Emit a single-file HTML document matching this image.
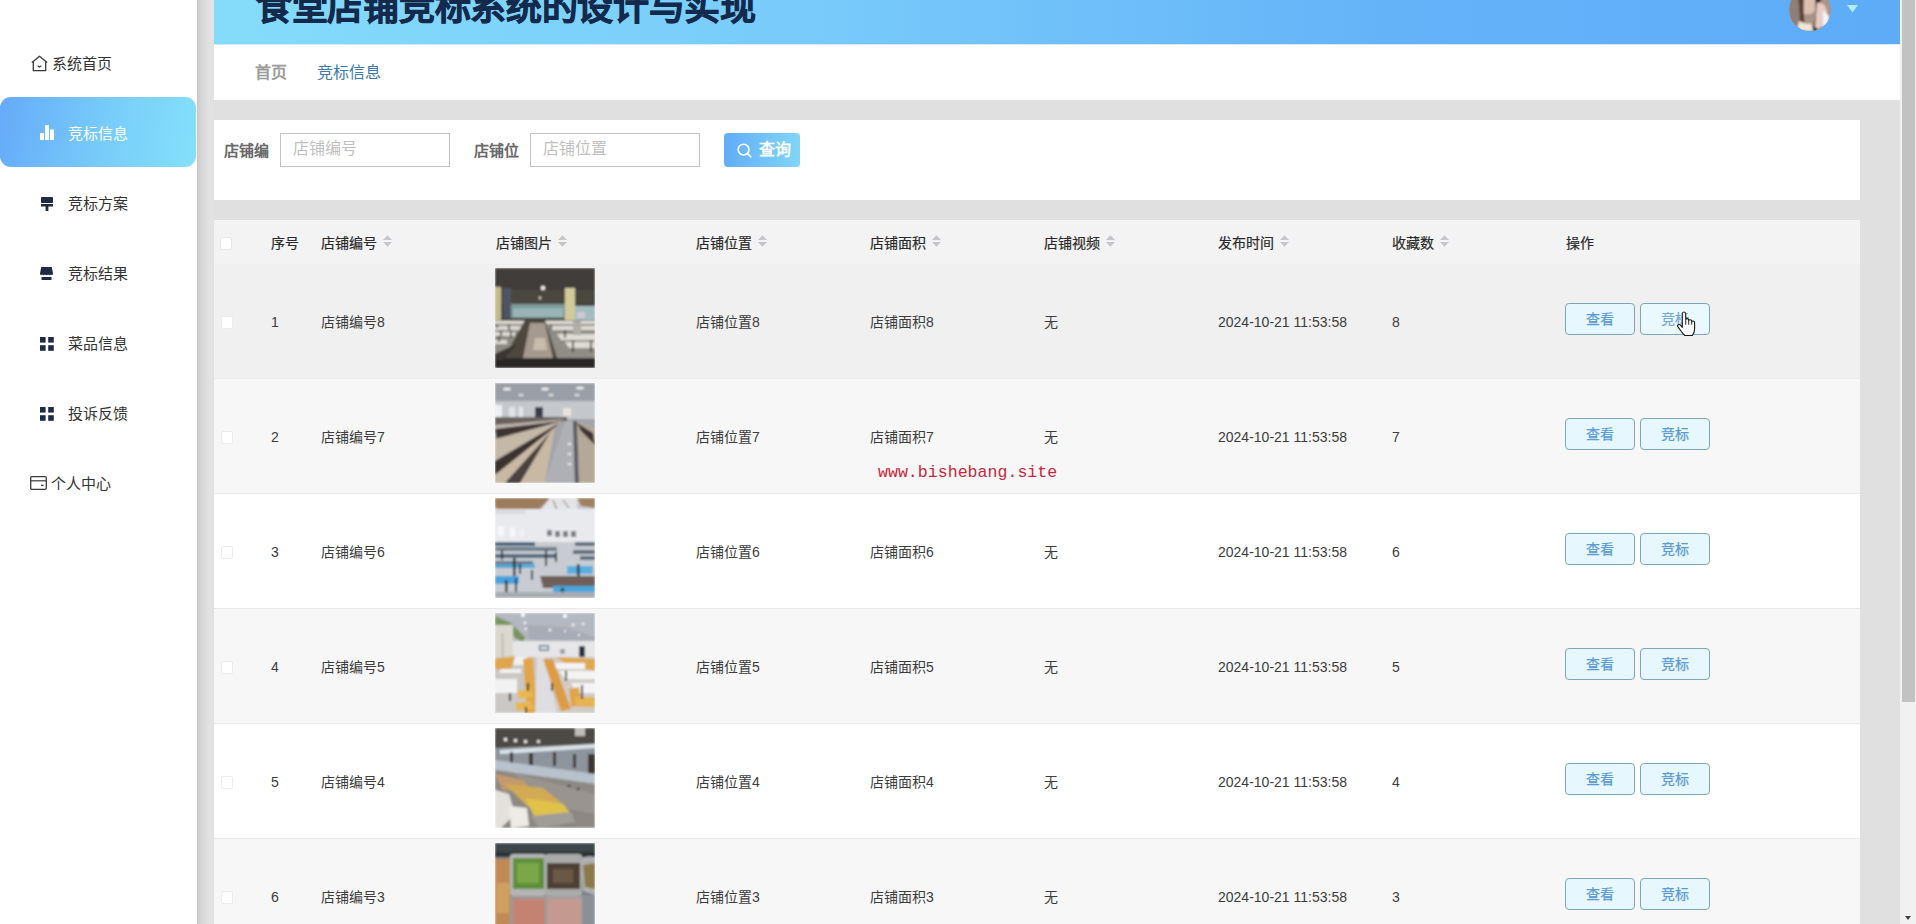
<!DOCTYPE html><html lang="zh-CN"><head><meta charset="utf-8"><title>食堂店铺竞标系统</title><style>
*{box-sizing:border-box;margin:0;padding:0}
html,body{width:1916px;height:924px;overflow:hidden}
body{background:#e0e0e0;font-family:"Liberation Sans",sans-serif;position:relative;color:#333}
.a{position:absolute}
.t{position:absolute;white-space:nowrap;line-height:1}
#side{left:0;top:0;width:197px;height:924px;background:#fff}
#sideshadow{left:197px;top:0;width:17px;height:924px;background:linear-gradient(to right,#c6c6c6 0px,#d3d3d3 3px,#dcdcdc 8px,#e2e2e2 12px,#e2e2e2 17px)}
.mi{position:absolute;left:0;width:196px;height:70px}
.mi .tx{position:absolute;font-size:15px;line-height:15px;color:#333;white-space:nowrap}
#active{background:linear-gradient(100deg,#65aaf8 0%,#78cdf9 55%,#84e0fb 100%);border-radius:11px}
#header{left:214px;top:0;width:1686px;height:44px;background:linear-gradient(to right,#85dcfa 0%,#78cbfa 35%,#64b3f9 70%,#5eacf8 100%)}
#hline{left:214px;top:44px;width:1686px;height:1px;background:#d2eafb}
#title{left:256px;top:-10px;font-size:36px;line-height:1;font-weight:bold;color:#132a4d;letter-spacing:-0.3px;-webkit-text-stroke:0.7px #132a4d}
#crumb{left:214px;top:45px;width:1686px;height:55px;background:#fff}
#search{left:214px;top:120px;width:1646px;height:80px;background:#fff}
.lbl{font-size:15px;font-weight:bold;color:#6a6a6a}
.inp{position:absolute;top:133px;width:170px;height:34px;border:1px solid #c2c2c2;background:#fff}
.ph{font-size:16px;color:#bfbfbf}
#btn{left:724px;top:133px;width:76px;height:34px;border-radius:4px;background:linear-gradient(to right,#62adf8,#80d6f9)}
#table{left:214px;top:220px;width:1646px;height:704px;background:#fff}
.hd{font-size:14px;color:#2a2a2a;-webkit-text-stroke:0.2px #2a2a2a}
.row{position:absolute;left:0;width:1646px;height:115px;border-bottom:1px solid #e8e8e8}
.cell{font-size:14px;color:#3c3c3c}
.cb{position:absolute;width:12px;height:13px;background:#fff;border:1px solid #ececec;border-radius:2px}
.sort{position:absolute;width:9px;height:12px}
.b{position:absolute;width:70px;height:32px;border:1px solid #7fa6b8;border-radius:4px;background:#e6f8fd;color:#5c9bd1;font-size:14px;line-height:30px;text-align:center;-webkit-text-stroke:0.25px #5c9bd1}
.img{position:absolute;left:281px;width:100px;height:100px;overflow:hidden}
#band{left:1860px;top:200px;width:40px;height:724px;background:#e0e0e0}
#sb{left:1900px;top:0;width:16px;height:924px;background:#f1f1f1}
#thumb{left:1902px;top:0;width:13px;height:702px;background:#c2c2c2}
#wm{left:878px;top:464.5px;font-family:"Liberation Mono",monospace;font-size:16.6px;color:#c6283a;line-height:1}
</style></head><body>
<div class="a" id="side"></div><div class="a" id="sideshadow"></div>
<div class="a" id="active" style="left:0;top:97px;width:196px;height:70px"></div>
<div class="a" style="left:31px;top:55px;line-height:0"><svg width="17" height="17" viewBox="0 0 17 17"><path d="M1.2 7.2 L8.5 1.2 L15.8 7.2" fill="none" stroke="#3a3a3a" stroke-width="1.3" stroke-linejoin="round" stroke-linecap="round"/><path d="M2.3 6.6 V15.6 H14.7 V6.6" fill="none" stroke="#3a3a3a" stroke-width="1.3" stroke-linejoin="round"/><path d="M6.6 10.8 L8.5 12 L10.4 10.8" fill="none" stroke="#3a3a3a" stroke-width="1.1"/></svg></div>
<div class="t" style="left:52px;top:56px;font-size:15px;color:#333">系统首页</div>
<div class="a" style="left:40px;top:125px;line-height:0"><svg width="14" height="15" viewBox="0 0 14 15"><rect x="0" y="8" width="4" height="7" fill="#fff"/><rect x="5" y="0" width="4" height="15" fill="#fff"/><rect x="10" y="4.5" width="4" height="10.5" fill="#fff"/></svg></div>
<div class="t" style="left:68px;top:126px;font-size:15px;color:#fff">竞标信息</div>
<div class="a" style="left:41px;top:197px;line-height:0"><svg width="12" height="14" viewBox="0 0 12 14"><rect x="0" y="0" width="12" height="6" rx="0.8" fill="#1f2a44"/><rect x="0" y="7" width="12" height="2.5" fill="#1f2a44"/><rect x="4.6" y="9" width="2.8" height="5" fill="#1f2a44"/></svg></div>
<div class="t" style="left:68px;top:196px;font-size:15px;color:#333">竞标方案</div>
<div class="a" style="left:40px;top:267px;line-height:0"><svg width="13" height="13" viewBox="0 0 13 13"><path d="M1.2 0 H11.8 L13 6.5 C13 8 11.5 8.5 10.8 7.6 C10 8.6 8.8 8.6 8.1 7.6 C7.4 8.6 5.6 8.6 4.9 7.6 C4.2 8.6 3 8.6 2.2 7.6 C1.5 8.5 0 8 0 6.5 Z" fill="#1f2a44"/><rect x="1.5" y="10" width="10" height="3" fill="#1f2a44"/></svg></div>
<div class="t" style="left:68px;top:266px;font-size:15px;color:#333">竞标结果</div>
<div class="a" style="left:40px;top:337px;line-height:0"><svg width="14" height="14" viewBox="0 0 14 14"><rect x="0" y="0" width="5.6" height="5.6" fill="#1f2a44"/><rect x="8.2" y="0" width="5.6" height="5.6" fill="#1f2a44"/><rect x="0" y="8.2" width="5.6" height="5.6" fill="#1f2a44"/><rect x="8.2" y="8.2" width="5.6" height="5.6" fill="#1f2a44"/></svg></div>
<div class="t" style="left:68px;top:336px;font-size:15px;color:#333">菜品信息</div>
<div class="a" style="left:40px;top:407px;line-height:0"><svg width="14" height="14" viewBox="0 0 14 14"><rect x="0" y="0" width="5.6" height="5.6" fill="#1f2a44"/><rect x="8.2" y="0" width="5.6" height="5.6" fill="#1f2a44"/><rect x="0" y="8.2" width="5.6" height="5.6" fill="#1f2a44"/><rect x="8.2" y="8.2" width="5.6" height="5.6" fill="#1f2a44"/></svg></div>
<div class="t" style="left:68px;top:406px;font-size:15px;color:#333">投诉反馈</div>
<div class="a" style="left:30px;top:476px;line-height:0"><svg width="17" height="14" viewBox="0 0 17 14"><rect x="0.7" y="0.7" width="15.6" height="12.6" rx="1.2" fill="none" stroke="#3a3a3a" stroke-width="1.3"/><path d="M0.7 4.8 H16.3" stroke="#3a3a3a" stroke-width="1.2"/><path d="M11 9.3 H13.5" stroke="#3a3a3a" stroke-width="1.3"/></svg></div>
<div class="t" style="left:51px;top:476px;font-size:15px;color:#333">个人中心</div>
<div class="a" id="header"></div><div class="a" id="hline"></div>
<div class="t" id="title">食堂店铺竞标系统的设计与实现</div>
<div class="a" style="left:1789px;top:-11px;width:42px;height:42px;line-height:0"><svg width="42" height="42" viewBox="0 0 42 42"><defs><clipPath id="avc"><circle cx="21" cy="21" r="21"/></clipPath><filter id="avb"><feGaussianBlur stdDeviation="1.3"/></filter></defs><g clip-path="url(#avc)"><rect width="42" height="42" fill="#a89488"/><g filter="url(#avb)"><rect x="0" y="0" width="12" height="42" fill="#8e8078"/><path d="M12 0 H26 V22 Q20 28 14 24 Z" fill="#dcc0b0"/><path d="M9 8 Q12 30 10 42 H16 Q14 26 15 8 Z" fill="#5a4030"/><path d="M24 0 Q30 20 23 42 H28 Q34 20 30 0 Z" fill="#3e2a20"/><path d="M28 14 Q36 12 38 22 Q38 34 30 40 L26 38 Z" fill="#e6ccc4"/><path d="M34 22 Q42 24 40 36 L34 40 Z" fill="#f4f4f6"/><path d="M10 32 Q18 36 22 34 L24 42 H8 Z" fill="#f2e6da"/></g></g></svg></div>
<div class="a" style="left:1847px;top:5px;line-height:0"><svg width="11" height="8" viewBox="0 0 11 8"><path d="M0 0 H11 L5.5 7.5 Z" fill="#b5e9fd"/></svg></div>
<div class="a" id="crumb"></div>
<div class="t" style="left:255px;top:65px;font-size:16px;font-weight:bold;color:#9c9c9c">首页</div>
<div class="t" style="left:317px;top:65px;font-size:16px;color:#3d7aa6">竞标信息</div>
<div class="a" id="search"></div>
<div class="t lbl" style="left:224px;top:143px">店铺编</div>
<div class="inp" style="left:280px"></div>
<div class="t ph" style="left:293px;top:141px">店铺编号</div>
<div class="t lbl" style="left:474px;top:143px">店铺位</div>
<div class="inp" style="left:530px"></div>
<div class="t ph" style="left:543px;top:141px">店铺位置</div>
<div class="a" id="btn"></div>
<div class="a" style="left:737px;top:143px;line-height:0"><svg width="15" height="15" viewBox="0 0 15 15"><circle cx="6.6" cy="6.6" r="5.4" fill="none" stroke="#fff" stroke-width="1.6"/><path d="M10.6 10.6 L13.8 13.8" stroke="#fff" stroke-width="1.7" stroke-linecap="round"/></svg></div>
<div class="t" style="left:759px;top:142px;font-size:16px;font-weight:bold;color:#fff">查询</div>
<div class="a" id="table">
<div class="a" style="left:0;top:0;width:1646px;height:44px;background:#f3f3f3"></div>
<div class="cb" style="left:6px;top:17px;border-color:#e6e6e6"></div>
<div class="t hd" style="left:57px;top:16px">序号</div>
<div class="t hd" style="left:107px;top:16px">店铺编号</div>
<div class="sort" style="left:169px;top:15px;line-height:0"><svg width="9" height="12" viewBox="0 0 9 12"><path d="M4.5 0.3 L9 5 H0 Z" fill="#c4c6ca"/><path d="M0 7 H9 L4.5 11.7 Z" fill="#c4c6ca"/></svg></div>
<div class="t hd" style="left:282px;top:16px">店铺图片</div>
<div class="sort" style="left:344px;top:15px;line-height:0"><svg width="9" height="12" viewBox="0 0 9 12"><path d="M4.5 0.3 L9 5 H0 Z" fill="#c4c6ca"/><path d="M0 7 H9 L4.5 11.7 Z" fill="#c4c6ca"/></svg></div>
<div class="t hd" style="left:482px;top:16px">店铺位置</div>
<div class="sort" style="left:544px;top:15px;line-height:0"><svg width="9" height="12" viewBox="0 0 9 12"><path d="M4.5 0.3 L9 5 H0 Z" fill="#c4c6ca"/><path d="M0 7 H9 L4.5 11.7 Z" fill="#c4c6ca"/></svg></div>
<div class="t hd" style="left:656px;top:16px">店铺面积</div>
<div class="sort" style="left:718px;top:15px;line-height:0"><svg width="9" height="12" viewBox="0 0 9 12"><path d="M4.5 0.3 L9 5 H0 Z" fill="#c4c6ca"/><path d="M0 7 H9 L4.5 11.7 Z" fill="#c4c6ca"/></svg></div>
<div class="t hd" style="left:830px;top:16px">店铺视频</div>
<div class="sort" style="left:892px;top:15px;line-height:0"><svg width="9" height="12" viewBox="0 0 9 12"><path d="M4.5 0.3 L9 5 H0 Z" fill="#c4c6ca"/><path d="M0 7 H9 L4.5 11.7 Z" fill="#c4c6ca"/></svg></div>
<div class="t hd" style="left:1004px;top:16px">发布时间</div>
<div class="sort" style="left:1066px;top:15px;line-height:0"><svg width="9" height="12" viewBox="0 0 9 12"><path d="M4.5 0.3 L9 5 H0 Z" fill="#c4c6ca"/><path d="M0 7 H9 L4.5 11.7 Z" fill="#c4c6ca"/></svg></div>
<div class="t hd" style="left:1178px;top:16px">收藏数</div>
<div class="sort" style="left:1226px;top:15px;line-height:0"><svg width="9" height="12" viewBox="0 0 9 12"><path d="M4.5 0.3 L9 5 H0 Z" fill="#c4c6ca"/><path d="M0 7 H9 L4.5 11.7 Z" fill="#c4c6ca"/></svg></div>
<div class="t hd" style="left:1352px;top:16px">操作</div>
<div class="row" style="top:44px;background:#f0f0f0;border-bottom-color:#ebebeb">
<div class="cb" style="left:7px;top:52px"></div>
<div class="t cell" style="left:57px;top:51px">1</div>
<div class="t cell" style="left:107px;top:51px">店铺编号8</div>
<div class="img" style="top:4px"><svg width="100" height="100" viewBox="0 0 100 100" preserveAspectRatio="none"><defs><filter id="bl1" x="-5%" y="-5%" width="110%" height="110%"><feGaussianBlur stdDeviation="1.0"/></filter></defs><g filter="url(#bl1)">
<rect width="100" height="100" fill="#3f3d3b"/>
<rect y="22" width="100" height="14" fill="#48463f"/>
<circle cx="48" cy="20" r="2.2" fill="#f6f2ea"/>
<circle cx="45" cy="30" r="1.4" fill="#d8d0c0"/>
<rect x="0" y="19" width="6" height="34" fill="#c4bc8c"/>
<rect x="8" y="20" width="8" height="30" fill="#4e5464"/>
<rect x="70" y="20" width="10" height="34" fill="#d2ca98"/>
<rect x="16" y="36" width="54" height="14" fill="#7e9898"/>
<rect x="18" y="40" width="50" height="9" fill="#98b4b4"/>
<rect x="80" y="38" width="20" height="15" fill="#a4bcc0"/>
<rect x="82" y="44" width="8" height="6" fill="#d0c8d8"/>
<path d="M0 52 H32 L22 76 L0 86 Z" fill="#8e8a84"/>
<path d="M0 53 H30 V56 H0 Z M0 58 H26 V62 H0 Z M0 64 H20 V68 H0 Z M0 72 H12 V76 H0 Z" fill="#dcd8d2"/>
<path d="M2 56 V60 M14 56 V62 M6 62 V68 M16 62 V70 M4 68 V74" stroke="#222" stroke-width="1.2"/>
<path d="M30 52 H50 L64 92 H8 Z" fill="#4e4640"/>
<path d="M35 55 H50 L58 90 H28 Z" fill="#a49a8e"/>
<path d="M40 70 H50 L52 82 H38 Z" fill="#c8bcac"/>
<path d="M50 52 H100 V92 L62 90 Z" fill="#908c86"/>
<path d="M50 53 H100 V56 H52 Z M54 58 H100 V62 H56 Z M62 66 H100 V72 H66 Z M70 74 H100 V80 H74 Z" fill="#e0dcd6"/>
<path d="M56 56 V62 M70 62 V70 M78 72 V84 M96 72 V84" stroke="#222" stroke-width="1.3"/>
<rect x="78" y="53" width="8" height="14" fill="#b0aca6"/>
<rect x="0" y="90" width="100" height="10" fill="#2c2826"/>
<path d="M0 86 L22 76 L8 92 H0 Z" fill="#3a3430"/>
</g></svg></div>
<div class="t cell" style="left:482px;top:51px">店铺位置8</div>
<div class="t cell" style="left:656px;top:51px">店铺面积8</div>
<div class="t cell" style="left:830px;top:51px">无</div>
<div class="t cell" style="left:1004px;top:51px">2024-10-21 11:53:58</div>
<div class="t cell" style="left:1178px;top:51px">8</div>
<div class="b" style="left:1351px;top:39px">查看</div>
<div class="b" style="left:1426px;top:39px;color:#74a8d4;-webkit-text-stroke:0.2px #74a8d4;background:#eaf9fd">竞标</div>
</div>
<div class="row" style="top:159px;background:#f7f7f7">
<div class="cb" style="left:7px;top:52px"></div>
<div class="t cell" style="left:57px;top:51px">2</div>
<div class="t cell" style="left:107px;top:51px">店铺编号7</div>
<div class="img" style="top:4px"><svg width="100" height="100" viewBox="0 0 100 100" preserveAspectRatio="none"><defs><filter id="bl2" x="-5%" y="-5%" width="110%" height="110%"><feGaussianBlur stdDeviation="1.0"/></filter></defs><g filter="url(#bl2)">
<rect width="100" height="100" fill="#a2a4aa"/>
<rect y="0" width="100" height="20" fill="#9a9ea6"/>
<ellipse cx="12" cy="6" rx="4" ry="1.3" fill="#f4f4f4"/><ellipse cx="50" cy="6" rx="4" ry="1.3" fill="#f4f4f4"/><ellipse cx="85" cy="5" rx="4" ry="1.3" fill="#f4f4f4"/>
<ellipse cx="26" cy="12" rx="3" ry="1" fill="#eaeaea"/><ellipse cx="56" cy="12" rx="3" ry="1" fill="#eaeaea"/><ellipse cx="82" cy="12" rx="3" ry="1" fill="#eaeaea"/>
<rect x="0" y="18" width="100" height="18" fill="#c4c8cc"/>
<rect x="0" y="22" width="7" height="12" fill="#eef2f4"/><rect x="14" y="24" width="6" height="10" fill="#e0e4e8"/><rect x="24" y="24" width="4" height="10" fill="#e4e8ec"/>
<rect x="40" y="24" width="8" height="10" fill="#3a3e4a"/><rect x="68" y="25" width="8" height="8" fill="#e8e4dc"/>
<path d="M0 34 H72 V38 L0 42 Z" fill="#6a6260"/>
<path d="M0 42 L70 36 L20 52 L0 55 Z" fill="#bcb4ac"/>
<path d="M0 46 L66 38 L2 58 Z" fill="#3e3432"/>
<path d="M0 56 L68 38 L40 58 L0 78 Z" fill="#c4b8a8"/>
<path d="M0 78 L64 40 L52 52 L0 92 Z" fill="#3a302e"/>
<path d="M0 92 L60 44 L50 100 H0 Z" fill="#c8b8a4"/>
<path d="M10 100 L62 42 L55 50 L25 100 Z" fill="#4a4240"/>
<path d="M50 100 L70 38 H78 L80 100 Z" fill="#aeb0b6"/>
<rect x="73" y="60" width="3" height="2" fill="#f0f0f0"/><rect x="73" y="70" width="3" height="2" fill="#f0f0f0"/><rect x="73" y="80" width="3" height="2" fill="#f0f0f0"/>
<path d="M78 38 H82 L84 100 H80 Z" fill="#5a5a62"/>
<path d="M82 38 L100 46 V100 H84 Z" fill="#b4a898"/>
<path d="M82 40 L98 50 L100 62 L86 48 Z" fill="#3e3634"/>
</g></svg></div>
<div class="t cell" style="left:482px;top:51px">店铺位置7</div>
<div class="t cell" style="left:656px;top:51px">店铺面积7</div>
<div class="t cell" style="left:830px;top:51px">无</div>
<div class="t cell" style="left:1004px;top:51px">2024-10-21 11:53:58</div>
<div class="t cell" style="left:1178px;top:51px">7</div>
<div class="b" style="left:1351px;top:39px">查看</div>
<div class="b" style="left:1426px;top:39px">竞标</div>
</div>
<div class="row" style="top:274px;background:#ffffff">
<div class="cb" style="left:7px;top:52px"></div>
<div class="t cell" style="left:57px;top:51px">3</div>
<div class="t cell" style="left:107px;top:51px">店铺编号6</div>
<div class="img" style="top:4px"><svg width="100" height="100" viewBox="0 0 100 100" preserveAspectRatio="none"><defs><filter id="bl3" x="-5%" y="-5%" width="110%" height="110%"><feGaussianBlur stdDeviation="1.0"/></filter></defs><g filter="url(#bl3)">
<rect width="100" height="100" fill="#c8ccd2"/>
<path d="M0 0 H55 L40 16 L28 18 L0 10 Z" fill="#9c7c5c"/>
<path d="M55 0 H82 V12 L45 14 Z" fill="#e4e4e6"/>
<path d="M58 2 L62 12 M68 2 L74 10" stroke="#585048" stroke-width="0.8"/>
<path d="M82 0 H100 V10 L86 8 Z" fill="#a08060"/>
<rect x="0" y="11" width="100" height="33" fill="#e8eaee"/>
<rect x="0" y="12" width="30" height="4" fill="#d8dadc"/>
<rect x="3" y="28" width="6" height="10" fill="#f6f8fa"/><rect x="15" y="30" width="5" height="9" fill="#f6f8fa"/><rect x="25" y="31" width="4" height="8" fill="#f0f2f4"/>
<rect x="52" y="32" width="5" height="6" fill="#7a7e84"/><rect x="60" y="33" width="5" height="6" fill="#7a7e84"/><rect x="68" y="33" width="5" height="6" fill="#7a7e84"/><rect x="76" y="33" width="5" height="6" fill="#7a7e84"/>
<path d="M0 44 H40 V48 H0 Z" fill="#4a6278"/>
<path d="M0 49 H62 V53 H0 Z" fill="#6e7e8c"/>
<path d="M0 56 H62 V60 H0 Z" fill="#546a7e"/>
<path d="M0 63 H38 V67 H0 Z" fill="#6a7a88"/>
<path d="M0 66 H30 V70 H0 Z" fill="#54a4d6"/>
<path d="M0 78 H24 V86 H0 Z" fill="#4aa2dc"/>
<path d="M28 66 H40 V70 H28 Z" fill="#5cacdc"/>
<rect x="6" y="52" width="2" height="10" fill="#1e2e40"/><rect x="18" y="60" width="2.5" height="18" fill="#1e2e40"/><rect x="24" y="66" width="2" height="10" fill="#1e2e40"/><rect x="36" y="72" width="2" height="10" fill="#1e2e40"/><rect x="50" y="52" width="2" height="16" fill="#1e2e40"/><rect x="60" y="54" width="2" height="10" fill="#1e2e40"/>
<rect x="10" y="82" width="2.5" height="18" fill="#1e2e40"/><rect x="20" y="80" width="2" height="14" fill="#1e2e40"/>
<path d="M80 44 H100 V48 H80 Z M78 52 H100 V56 H78 Z M85 58 H100 V62 H85 Z" fill="#5e6e7c"/>
<path d="M72 68 H98 V76 H72 Z" fill="#5aaee0"/>
<rect x="82" y="66" width="2.5" height="14" fill="#1e2e40"/>
<path d="M45 78 L100 78 V90 L48 90 Z" fill="#6e6058"/>
<path d="M58 88 H100 V96 H58 Z" fill="#4aa6dc"/>
<rect x="66" y="90" width="3" height="10" fill="#1e2e40"/>
<rect x="0" y="94" width="100" height="6" fill="#a8acb0"/>
</g></svg></div>
<div class="t cell" style="left:482px;top:51px">店铺位置6</div>
<div class="t cell" style="left:656px;top:51px">店铺面积6</div>
<div class="t cell" style="left:830px;top:51px">无</div>
<div class="t cell" style="left:1004px;top:51px">2024-10-21 11:53:58</div>
<div class="t cell" style="left:1178px;top:51px">6</div>
<div class="b" style="left:1351px;top:39px">查看</div>
<div class="b" style="left:1426px;top:39px">竞标</div>
</div>
<div class="row" style="top:389px;background:#f7f7f7">
<div class="cb" style="left:7px;top:52px"></div>
<div class="t cell" style="left:57px;top:51px">4</div>
<div class="t cell" style="left:107px;top:51px">店铺编号5</div>
<div class="img" style="top:4px"><svg width="100" height="100" viewBox="0 0 100 100" preserveAspectRatio="none"><defs><filter id="bl4" x="-5%" y="-5%" width="110%" height="110%"><feGaussianBlur stdDeviation="1.0"/></filter></defs><g filter="url(#bl4)">
<rect width="100" height="100" fill="#d6d6da"/>
<path d="M0 0 H100 V28 H0 Z" fill="#b4b8c0"/>
<path d="M30 12 L70 14 L100 24 V30 L60 30 L34 26 Z" fill="#a8acb6"/>
<circle cx="28" cy="2" r="2" fill="#fff"/><circle cx="70" cy="3" r="2" fill="#fff"/><circle cx="30" cy="10" r="1.3" fill="#fff"/><circle cx="31" cy="16" r="1.2" fill="#fff"/><circle cx="55" cy="17" r="1.3" fill="#fff"/><circle cx="78" cy="12" r="1.3" fill="#fff"/><circle cx="88" cy="11" r="1.2" fill="#fff"/><circle cx="70" cy="18" r="1" fill="#fff"/><circle cx="84" cy="22" r="1" fill="#fff"/>
<path d="M0 3 L16 10 L30 24 L28 30 L14 20 L0 12 Z" fill="#7a9460"/>
<rect x="0" y="12" width="18" height="44" fill="#dcd8d0"/>
<rect x="6" y="20" width="3" height="34" fill="#ccc6bc"/>
<rect x="18" y="28" width="82" height="17" fill="#e6e6e8"/>
<rect x="44" y="32" width="10" height="6" fill="#3a3e44"/><rect x="45" y="33" width="8" height="4" fill="#c8d0dc"/>
<rect x="65" y="36" width="5" height="5" fill="#a0a0a8"/>
<rect x="84" y="33" width="6" height="13" fill="#2a3040"/>
<path d="M0 44 L44 44 L44 100 H0 Z" fill="#cac8c4"/>
<path d="M0 46 L20 43 L16 58 L0 56 Z" fill="#e0a44c"/>
<path d="M20 44 H32 V52 H18 Z M6 56 H26 V60 H4 Z M0 66 H22 V80 H0 Z" fill="#f2f2f2"/>
<path d="M28 46 L38 44 L42 100 H32 Z" fill="#e2a64a"/>
<path d="M22 78 L36 76 L38 84 L24 86 Z M20 90 L36 88 L38 96 L22 98 Z" fill="#e8b850"/>
<rect x="14" y="80" width="2" height="8" fill="#222"/><rect x="32" y="70" width="2" height="8" fill="#222"/><rect x="30" y="94" width="2" height="6" fill="#222"/>
<path d="M42 44 L50 44 L64 100 H40 Z" fill="#dedee2"/>
<path d="M50 44 H100 V100 H62 Z" fill="#d0ccc6"/>
<path d="M62 44 L100 46 V58 L72 52 Z" fill="#e2a84e"/>
<path d="M56 50 H90 V56 H60 Z M64 58 H100 V66 H70 Z M76 70 H100 V80 H82 Z" fill="#f4f4f4"/>
<path d="M48 46 L58 46 L76 96 L66 98 Z" fill="#dc9c44"/>
<path d="M74 76 L84 74 L86 92 L76 94 Z" fill="#e0a448"/>
<path d="M80 84 H100 V94 H82 Z" fill="#e6b452"/>
<rect x="70" y="58" width="2" height="10" fill="#222"/><rect x="86" y="72" width="2" height="14" fill="#222"/><rect x="56" y="70" width="2" height="8" fill="#222"/>
</g></svg></div>
<div class="t cell" style="left:482px;top:51px">店铺位置5</div>
<div class="t cell" style="left:656px;top:51px">店铺面积5</div>
<div class="t cell" style="left:830px;top:51px">无</div>
<div class="t cell" style="left:1004px;top:51px">2024-10-21 11:53:58</div>
<div class="t cell" style="left:1178px;top:51px">5</div>
<div class="b" style="left:1351px;top:39px">查看</div>
<div class="b" style="left:1426px;top:39px">竞标</div>
</div>
<div class="row" style="top:504px;background:#ffffff">
<div class="cb" style="left:7px;top:52px"></div>
<div class="t cell" style="left:57px;top:51px">5</div>
<div class="t cell" style="left:107px;top:51px">店铺编号4</div>
<div class="img" style="top:4px"><svg width="100" height="100" viewBox="0 0 100 100" preserveAspectRatio="none"><defs><filter id="bl5" x="-5%" y="-5%" width="110%" height="110%"><feGaussianBlur stdDeviation="1.0"/></filter></defs><g filter="url(#bl5)">
<rect width="100" height="100" fill="#8e8884"/>
<rect y="0" width="100" height="20" fill="#4e4844"/>
<rect x="9" y="10" width="3" height="3" fill="#f0f0f0"/><rect x="19" y="11" width="3" height="3" fill="#e8e8e8"/><rect x="29" y="12" width="3" height="3" fill="#e8e8e8"/><rect x="42" y="12" width="3" height="3" fill="#d8d8d8"/>
<rect x="80" y="0" width="10" height="8" fill="#c0bcb8"/>
<path d="M0 20 L100 16 V46 L0 34 Z" fill="#8e949c"/>
<path d="M5 22 L100 16 V20 L5 26 Z" fill="#dce4ea"/>
<rect x="15" y="24" width="3" height="12" fill="#3a3430"/><rect x="34" y="25" width="4" height="14" fill="#3a3430"/><rect x="58" y="24" width="3" height="14" fill="#3a3430"/><rect x="78" y="26" width="3" height="14" fill="#3a3430"/><rect x="93" y="26" width="7" height="20" fill="#3a3430"/>
<path d="M0 32 L100 46 V56 L0 42 Z" fill="#b8c2cc"/>
<path d="M0 42 L100 56 V90 L60 100 H0 Z" fill="#8e8884"/>
<path d="M15 44 L100 66 V86 L70 80 Z" fill="#9a9490"/>
<circle cx="74" cy="58" r="1.3" fill="#2a2420"/><circle cx="83" cy="61" r="1.3" fill="#2a2420"/>
<path d="M0 46 L28 52 L40 64 L8 62 Z" fill="#c49a6a"/>
<path d="M10 56 L48 60 L70 78 L32 78 Z" fill="#d2aa52"/>
<path d="M30 70 L68 76 L76 86 L40 90 Z" fill="#e0c24c"/>
<path d="M0 62 L14 66 L20 86 L6 100 H0 Z" fill="#e4e0dc"/>
<path d="M14 78 L32 80 L34 98 L16 100 Z" fill="#eeeae6"/>
<path d="M36 88 L76 84 L80 94 L44 100 Z" fill="#a09c98"/>
</g></svg></div>
<div class="t cell" style="left:482px;top:51px">店铺位置4</div>
<div class="t cell" style="left:656px;top:51px">店铺面积4</div>
<div class="t cell" style="left:830px;top:51px">无</div>
<div class="t cell" style="left:1004px;top:51px">2024-10-21 11:53:58</div>
<div class="t cell" style="left:1178px;top:51px">4</div>
<div class="b" style="left:1351px;top:39px">查看</div>
<div class="b" style="left:1426px;top:39px">竞标</div>
</div>
<div class="row" style="top:619px;background:#f7f7f7">
<div class="cb" style="left:7px;top:52px"></div>
<div class="t cell" style="left:57px;top:51px">6</div>
<div class="t cell" style="left:107px;top:51px">店铺编号3</div>
<div class="img" style="top:4px"><svg width="100" height="100" viewBox="0 0 100 100" preserveAspectRatio="none"><defs><filter id="bl6" x="-5%" y="-5%" width="110%" height="110%"><feGaussianBlur stdDeviation="1.0"/></filter></defs><g filter="url(#bl6)">
<rect width="100" height="100" fill="#7a7e82"/>
<rect y="0" width="100" height="9" fill="#3c464a"/>
<rect y="9" width="100" height="5" fill="#2a3034"/>
<rect x="0" y="16" width="16" height="84" fill="#c08a56"/>
<rect x="2" y="40" width="12" height="30" fill="#d0a060"/>
<rect x="15" y="11" width="36" height="42" rx="3" fill="#b4b4b4"/>
<rect x="18" y="15" width="31" height="31" fill="#5e8e38"/>
<rect x="22" y="20" width="22" height="20" fill="#7aa848"/>
<rect x="50" y="11" width="37" height="42" rx="3" fill="#aaaaaa"/>
<rect x="52" y="20" width="33" height="26" fill="#4e4034"/>
<rect x="58" y="26" width="20" height="14" fill="#6a5846"/>
<path d="M86 16 Q92 12 100 14 V52 L88 48 Z" fill="#b0b0b2"/>
<path d="M88 22 L100 20 V46 L90 44 Z" fill="#8a7a4a"/>
<rect x="15" y="53" width="36" height="47" fill="#9a9896"/>
<rect x="18" y="56" width="32" height="44" fill="#c48272"/>
<rect x="51" y="53" width="36" height="47" fill="#a4a0a0"/>
<rect x="53" y="56" width="33" height="44" fill="#c49a90"/>
<rect x="87" y="52" width="13" height="48" fill="#8a9096"/>
</g></svg></div>
<div class="t cell" style="left:482px;top:51px">店铺位置3</div>
<div class="t cell" style="left:656px;top:51px">店铺面积3</div>
<div class="t cell" style="left:830px;top:51px">无</div>
<div class="t cell" style="left:1004px;top:51px">2024-10-21 11:53:58</div>
<div class="t cell" style="left:1178px;top:51px">3</div>
<div class="b" style="left:1351px;top:39px">查看</div>
<div class="b" style="left:1426px;top:39px">竞标</div>
</div>
</div>
<div class="a" id="band"></div>
<div class="a" id="sb"></div><div class="a" id="thumb"></div>
<div class="a" style="left:1905px;top:916px;width:0;height:0;border-left:3.5px solid transparent;border-right:3.5px solid transparent;border-top:4.5px solid #404040"></div>
<div class="t" id="wm">www.bishebang.site</div>
<div class="a" style="left:1676px;top:311px;line-height:0"><svg width="20" height="26" viewBox="-1 -1 20 26"><path d="M5.3 2 Q5.3 0 7 0 Q8.7 0 8.7 2 V7.5 Q8.7 6.6 10.2 6.6 Q11.7 6.6 11.7 8 V8.6 Q11.7 7.7 13.2 7.7 Q14.7 7.7 14.7 9.2 V9.8 Q14.7 9 16.1 9 Q17.6 9 17.6 10.6 V16.5 Q17.6 21 15.3 23.5 H7.8 Q6 22 4 19 L0.8 14.6 Q0.1 13.3 1.3 12.7 Q2.5 12.1 3.5 13.2 L5.3 15.3 Z" fill="#fff" stroke="#151515" stroke-width="1.1" stroke-linejoin="round"/><path d="M8.7 7.8 V12.8 M11.7 8.7 V12.8 M14.7 9.8 V12.8" stroke="#151515" stroke-width="0.9"/></svg></div>
</body></html>
